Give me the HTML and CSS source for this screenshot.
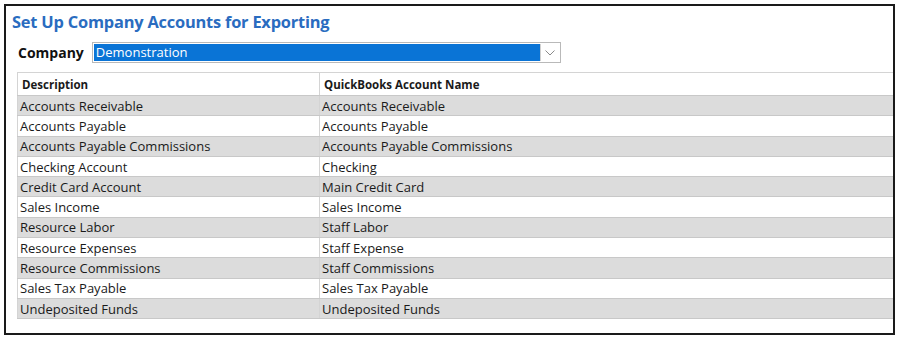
FILE: index.html
```html
<!DOCTYPE html>
<html lang="en">
<head>
  <meta charset="UTF-8">
  <title>Set Up Company Accounts for Exporting</title>
  <link rel="stylesheet" href="styles.css">
</head>
<body>

<div class="export-panel">
  <h2 class="panel-title">Set Up Company Accounts for Exporting</h2>

  <!-- Company picker -->
  <div class="company-row">
    <label for="company">Company</label>
    <div class="combo" id="company">
      <span class="combo-value">Demonstration</span>
      <span class="combo-arrow">
        <svg width="10" height="6" viewBox="0 0 10 6"><path d="M0.5 0.5 L5 5 L9.5 0.5" fill="none" stroke="#8a8a8a" stroke-width="1"/></svg>
      </span>
    </div>
  </div>

  <!-- Account mapping grid -->
  <table class="account-grid">
    <thead>
      <tr>
        <th>Description</th>
        <th>QuickBooks Account Name</th>
      </tr>
    </thead>
    <tbody>
      <tr><td>Accounts Receivable</td><td>Accounts Receivable</td></tr>
      <tr><td>Accounts Payable</td><td>Accounts Payable</td></tr>
      <tr><td>Accounts Payable Commissions</td><td>Accounts Payable Commissions</td></tr>
      <tr><td>Checking Account</td><td>Checking</td></tr>
      <tr><td>Credit Card Account</td><td>Main Credit Card</td></tr>
      <tr><td>Sales Income</td><td>Sales Income</td></tr>
      <tr><td>Resource Labor</td><td>Staff Labor</td></tr>
      <tr><td>Resource Expenses</td><td>Staff Expense</td></tr>
      <tr><td>Resource Commissions</td><td>Staff Commissions</td></tr>
      <tr><td>Sales Tax Payable</td><td>Sales Tax Payable</td></tr>
      <tr><td>Undeposited Funds</td><td>Undeposited Funds</td></tr>
    </tbody>
  </table>
</div>

</body>
</html>
```

FILE: styles.css
```css
/* General */
body {
  margin: 4px;
  font-family: 'Open Sans', 'Noto Sans', sans-serif;
  background: #fff;
}

.export-panel {
  width: 891px;
  height: 331px;
  box-sizing: border-box;
  border: 2px solid #1a1a1a;
  padding: 5px 0 0 6px;
  overflow: hidden;
}

.panel-title {
  margin: 0;
  font-size: 16.4px;
  line-height: 22px;
  font-weight: bold;
  color: #2a6cc0;
  letter-spacing: -0.2px;
}

/* Company picker */
.company-row {
  display: flex;
  align-items: center;
  gap: 8px;
  margin: 9px 0 0 6px;
}

.company-row label {
  font-size: 14px;
  font-weight: bold;
  color: #111;
  line-height: 20px;
}

.combo {
  display: flex;
  width: 469px;
  height: 21px;
  box-sizing: border-box;
  border: 1px solid #b9b9b9;
  padding: 1px;
}

.combo-value {
  flex: 1;
  background: #0a74d6;
  color: #fff;
  font-size: 13px;
  line-height: 17px;
  padding-left: 2px;
}

.combo-arrow {
  width: 18px;
  display: flex;
  align-items: center;
  justify-content: center;
  border-left: 1px solid #d0d0d0;
}

/* Grid */
.account-grid {
  margin: 9px 0 0 5px;
  width: 877px;
  border-collapse: collapse;
  font-size: 13px;
  color: #1a1a1a;
}

.account-grid th,
.account-grid td {
  text-align: left;
  padding: 0 2px;
  height: 20px;
  box-sizing: border-box;
  border-bottom: 1px solid #c8c8c8;
  white-space: nowrap;
}

.account-grid th {
  font-size: 11.5px;
  font-weight: bold;
  height: 23px;
  padding: 0 4px;
  border-top: 1px solid #d4d4d4;
  border-left: 1px solid #d4d4d4;
  border-bottom: 1px solid #c8c8c8;
}

.account-grid th:first-child,
.account-grid td:first-child {
  width: 302px;
  border-left: 1px solid #d4d4d4;
}

.account-grid td + td,
.account-grid th + th {
  border-left: 1px solid #d4d4d4;
}

.account-grid tbody tr {
  height: 20.3px;
}

.account-grid tbody tr:nth-child(odd) {
  background: #dcdcdc;
}
```
